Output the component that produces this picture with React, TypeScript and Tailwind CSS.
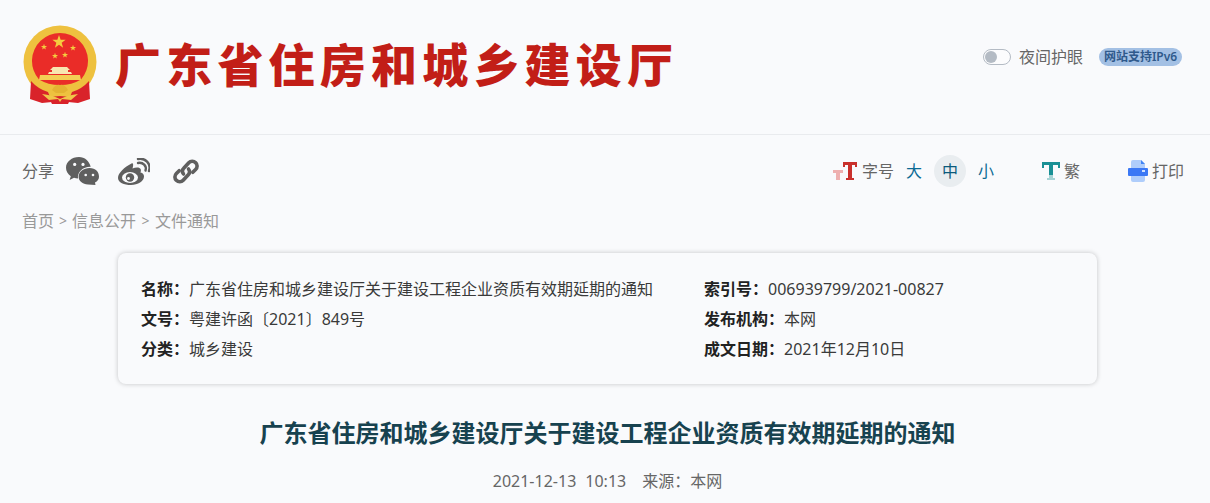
import React from 'react';

const CJK = "font-['Noto_Sans','Noto_Sans_CJK_SC',sans-serif]";

const star = (cx: number, cy: number, r: number) => {
   const pts: string[] = [];
   for (let i = 0; i < 10; i++) {
      const rad = i % 2 === 0 ? r : r * 0.4;
      const a = -Math.PI / 2 + (i * Math.PI) / 5;
      pts.push(`${(cx + rad * Math.cos(a)).toFixed(2)},${(cy + rad * Math.sin(a)).toFixed(2)}`);
   }
   return pts.join(' ');
};

const Emblem = () => (
   <svg width="76" height="80" viewBox="0 0 76 80" className="shrink-0">
      <circle cx="38" cy="37" r="36.5" fill="#eec13f" />
      <path d="M17 54.5 A28 28 0 1 1 59 54.5 Q50 60 38 60 Q26 60 17 54.5 Z" fill="#ea2c28" />
      <polygon points={star(37, 17, 7)} fill="#f4cc3f" />
      <polygon points={star(22, 22, 3.2)} fill="#f4cc3f" />
      <polygon points={star(51, 23, 3.2)} fill="#f4cc3f" />
      <polygon points={star(33, 31, 3.2)} fill="#f4cc3f" />
      <polygon points={star(43, 30, 3.2)} fill="#f4cc3f" />
      <path d="M31 42 H45 L48 45 H46 V47 H49 L50 49 H26 L27 47 H30 V45 H28 Z" fill="#f8e6b0" />
      <path d="M18 50 H58 L59 55 H17 Z" fill="#f4cd55" />
      <path d="M9 56 Q16 64 26 67 L30 77 L20 78 L8 74 Z" fill="#d9232a" />
      <path d="M67 56 Q60 64 50 67 L46 77 L56 78 L68 74 Z" fill="#d9232a" />
      <path d="M27 73 Q38 69 49 73 L46 79 L30 79 Z" fill="#d9232a" />
      <path d="M32 62 Q35 59 38 60 Q41 59 44 62 L46 65 L42 68 L34 68 L30 65 Z" fill="#e4b232" />
      <path d="M20 69 Q30 70 38 74 Q46 70 56 69 L49 75 L40 74 L38 77 L36 74 L27 75 Z" fill="#f0c64a" />
   </svg>
);

const FontIcon = () => (
   <svg width="26" height="20" viewBox="0 0 26 20">
      <path d="M1 9 H11 V12 H8 V19 H4 V12 H1 Z" fill="#eeb0b0" />
      <path d="M11 1 H25 V6 H23 V4 H20 V17 H22 V19 H14 V17 H16 V4 H13 V6 H11 Z" fill="#c9302c" />
   </svg>
);

const TradIcon = () => (
   <svg width="18" height="20" viewBox="0 0 18 20">
      <path d="M0 1 H18 V7 H16 V4 H11 V14 H7 V4 H2 V7 H0 Z" fill="#1a9095" />
      <path d="M7 14 H11 V17 H13 V19 H5 V17 H7 Z" fill="#a5d3d5" />
   </svg>
);

const PrintIcon = () => (
   <svg width="20" height="22" viewBox="0 0 20 22">
      <path d="M3 2 Q3 0 5 0 H13 L17 4 V20 Q17 22 15 22 H5 Q3 22 3 20 Z" fill="#afcdfb" />
      <path d="M13 0 L17 4 H13 Z" fill="#4285f4" />
      <path d="M1 8 H19 Q20 8 20 9 V15 Q20 16 19 16 H1 Q0 16 0 15 V9 Q0 8 1 8 Z" fill="#3b78f5" />
      <rect x="14" y="10" width="3" height="2" fill="#cfe0fd" />
   </svg>
);

const WechatIcon = () => (
   <svg width="33" height="28" viewBox="0 0 33 28">
      <path d="M13 0 C5.8 0 0 4.8 0 10.8 C0 14.2 1.9 17.2 4.8 19.2 L3.6 23 L8 20.7 C9.3 21.1 10.6 21.4 12 21.5 C11.1 15 17 9.6 24.7 9.8 C23.4 4.2 18.7 0 13 0 Z" fill="#5f5f5f" />
      <path d="M23.6 11 C17.6 11 12.6 14.9 12.6 19.7 C12.6 24 16.6 27 22 27.4 L29.5 28 L29 25.6 C31.6 24.2 33 22.2 33 19.7 C33 14.9 29.5 11 23.6 11 Z" fill="#5f5f5f" />
      <circle cx="8.7" cy="7.4" r="1.6" fill="#fafbfd" />
      <circle cx="17" cy="7.4" r="1.6" fill="#fafbfd" />
      <circle cx="19.7" cy="18" r="1.3" fill="#fafbfd" />
      <circle cx="27" cy="18" r="1.3" fill="#fafbfd" />
   </svg>
);

const WeiboIcon = () => (
   <svg width="32" height="27" viewBox="0 0 32 27">
      <path d="M13.5 5.5 C6.5 9 0 15 0 20 C0 24.5 6 27 13 27 C20 27 26 23 26 18.5 C26 15.5 23.5 14.8 22.5 14.5 C23.5 12 23 9.5 19 9.5 C17.5 9.5 16 10 14.5 10.5 C15.5 7.5 15.5 4.5 13.5 5.5 Z" fill="#5f5f5f" />
      <ellipse cx="12" cy="19.5" rx="8" ry="5.4" fill="#fafbfd" />
      <circle cx="12" cy="19.5" r="4.2" fill="#5f5f5f" />
      <circle cx="10.5" cy="20.5" r="1.4" fill="#fafbfd" />
      <path d="M20 5 C25 4 29 8 27.5 12.5" fill="none" stroke="#5f5f5f" strokeWidth="2.4" strokeLinecap="round" />
      <path d="M20 1 C27 -0.5 33.5 5.5 31 13" fill="none" stroke="#5f5f5f" strokeWidth="2.4" strokeLinecap="round" />
   </svg>
);

const LinkIcon = () => (
   <svg width="26" height="27" viewBox="0 0 26 26" fill="none" stroke="#5f5f5f" strokeWidth="3.6" strokeLinecap="round">
      <path d="M10.5 15.5 C9 13.5 9 11.5 10.5 10 L15.8 4.2 C17.6 2.2 20.8 2.2 22.6 4.2 C24.6 6 24.6 9 22.6 11 L19.8 13.8" />
      <path d="M15.5 10.5 C17 12.5 17 14.5 15.5 16 L10.2 21.8 C8.4 23.8 5.2 23.8 3.4 21.8 C1.4 20 1.4 17 3.4 15 L6.2 12.2" />
   </svg>
);

const InfoRow = ({ label, value }: { label: string; value: string }) => (
   <div className="flex items-center h-[30px] text-[16px] leading-[30px]">
      <span className="font-bold text-[#222]">{label}：</span>
      <span className="text-[#3a3a3a]">{value}</span>
   </div>
);

export default function App() {
   return (
      <div className={`h-[503px] overflow-hidden bg-[#f9fafc] ${CJK}`}>
         <header className="h-[135px] border-b border-[#e9ebee] flex justify-between pl-[22px] pr-[28px]">
            <div className="flex items-start gap-[17px] pt-[25px]">
               <Emblem />
               <h1 className="text-[46px] leading-[80px] font-black text-[#c21e17] tracking-[5.2px] font-['Noto_Sans_CJK_SC',sans-serif] -mt-[3px]">
                  广东省住房和城乡建设厅
               </h1>
            </div>
            <div className="flex items-center h-[114px]">
               <span className="relative w-[28px] h-[16px] rounded-full border border-[#b4bbc4] bg-[#fcfcfd] mr-[8px]">
                  <span className="absolute left-[1px] top-[1px] w-[12px] h-[12px] rounded-full bg-[#b4bbc4]" />
               </span>
               <span className="text-[16px] text-[#666] mr-[16px]">夜间护眼</span>
               <span className="h-[18px] w-[83px] rounded-full bg-[#a3c0e4] text-[#2f5a8c] text-[12px] font-semibold leading-[18px] text-center">网站支持IPv6</span>
            </div>
         </header>

         <div className="h-[72px] flex items-center justify-between pl-[22px] pr-[26px]">
            <div className="flex items-center">
               <span className="text-[16px] text-[#666] mr-[12px]">分享</span>
               <span className="mr-[19px] flex"><WechatIcon /></span>
               <span className="mr-[23px] flex"><WeiboIcon /></span>
               <LinkIcon />
            </div>
            <div className="flex items-center text-[16px] text-[#666]">
               <span className="flex mr-[4px]"><FontIcon /></span>
               <span className="mr-[12px]">字号</span>
               <span className="w-[16px] text-center text-[#0b6a94] mr-[12px]">大</span>
               <span className="w-[32px] h-[32px] rounded-full bg-[#e9edf0] flex items-center justify-center text-[#0b5a7c] mr-[12px]">中</span>
               <span className="w-[16px] text-center text-[#0b6a94] mr-[48px]">小</span>
               <span className="flex mr-[4px]"><TradIcon /></span>
               <span className="mr-[48px]">繁</span>
               <span className="flex mr-[4px]"><PrintIcon /></span>
               <span>打印</span>
            </div>
         </div>

         <nav className="pl-[22px] h-[28px] text-[16px] leading-[28px] text-[#999] flex items-center">
            首页<span className="text-[14px] w-[18px] text-center">&gt;</span>信息公开<span className="text-[14px] w-[19px] text-center">&gt;</span>文件通知
         </nav>

         <section className="mt-[18px] ml-[118px] w-[979px] h-[131px] rounded-[8px] bg-[#f9fafc] shadow-[0_0_5px_rgba(0,0,0,0.22)] pl-[23px] pt-[21px] grid grid-cols-[563px_1fr]">
            <div>
               <InfoRow label="名称" value="广东省住房和城乡建设厅关于建设工程企业资质有效期延期的通知" />
               <InfoRow label="文号" value="粤建许函〔2021〕849号" />
               <InfoRow label="分类" value="城乡建设" />
            </div>
            <div>
               <InfoRow label="索引号" value="006939799/2021-00827" />
               <InfoRow label="发布机构" value="本网" />
               <InfoRow label="成文日期" value="2021年12月10日" />
            </div>
         </section>

         <h2 className="mt-[31px] pl-[5px] text-center text-[24px] leading-[36px] font-bold text-[#17424f]">
            广东省住房和城乡建设厅关于建设工程企业资质有效期延期的通知
         </h2>
         <p className="mt-[19px] pl-[5px] flex justify-center text-[16px] text-[#666] leading-[22px]">
            <span className="mr-[9px]">2021-12-13</span>
            <span className="mr-[16px]">10:13</span>
            <span>来源：本网</span>
         </p>
      </div>
   );
}
